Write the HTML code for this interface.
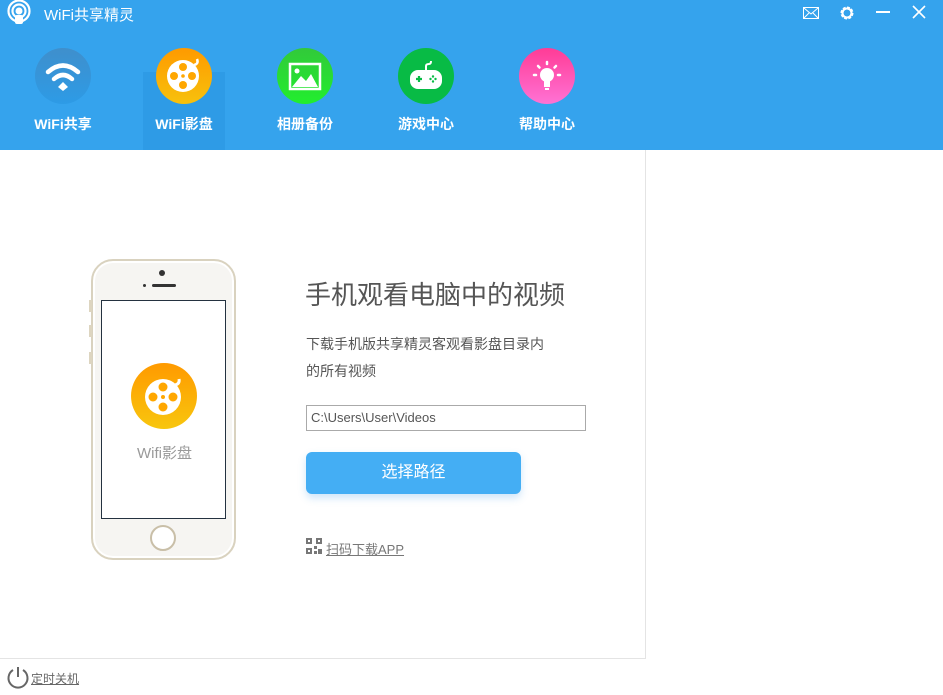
<!DOCTYPE html>
<html><head><meta charset="utf-8"><style>
*{margin:0;padding:0;box-sizing:border-box}
body{width:943px;height:695px;overflow:hidden;background:#fff;font-family:"Liberation Sans","Noto Sans CJK SC",sans-serif;position:relative}
.hdr{position:absolute;left:0;top:0;width:943px;height:150px;background:#35a3ed}
.sel{position:absolute;left:143px;top:72px;width:82px;height:78px;background:#2e9be6}
.title{position:absolute;left:44px;top:4px;color:#fff;font-size:15px}
.tab{position:absolute;top:48px;width:100px;text-align:center}
.tab .c{width:56px;height:56px;border-radius:50%;margin:0 auto;position:relative}
.tab .c svg{position:absolute;left:0;top:0}
.tab .l{color:#fff;font-weight:bold;font-size:14px;margin-top:10px}
.vline{position:absolute;left:645px;top:150px;width:1px;height:508px;background:#e4e4e4}
.hline{position:absolute;left:0;top:658px;width:646px;height:1px;background:#e4e4e4}
</style></head><body>
<div class="hdr"></div>
<div class="sel"></div>
<svg style="position:absolute;left:5px;top:0" width="28" height="26" viewBox="0 0 28 26">
<circle cx="14" cy="11" r="10.5" fill="none" stroke="#fff" stroke-width="2.2"/>
<circle cx="14" cy="11" r="6.5" fill="none" stroke="#fff" stroke-width="2.2"/>
<circle cx="14" cy="11" r="3.5" fill="#fff"/>
<rect x="10" y="15" width="8" height="9" rx="2" fill="#fff"/>
</svg>
<div class="title">WiFi共享精灵</div>
<svg style="position:absolute;left:803px;top:7px" width="16" height="12" viewBox="0 0 16 12"><rect x="0.5" y="0.5" width="15" height="11" fill="none" stroke="#fff"/><path d="M1 1 L8 7 L15 1 M1 11 L6 6 M15 11 L10 6" fill="none" stroke="#fff"/></svg>
<svg style="position:absolute;left:839px;top:5px" width="16" height="16" viewBox="0 0 16 16"><circle cx="8" cy="8" r="5" fill="none" stroke="#fff" stroke-width="3" stroke-dasharray="2.6 1.3"/><circle cx="8" cy="8" r="4.5" fill="none" stroke="#fff" stroke-width="2"/></svg>
<div style="position:absolute;left:876px;top:11px;width:14px;height:2px;background:#fff"></div>
<svg style="position:absolute;left:912px;top:5px" width="14" height="14" viewBox="0 0 14 14"><path d="M1 1L13 13M13 1L1 13" stroke="#fff" stroke-width="1.6"/></svg>

<div class="tab" style="left:13px"><div class="c" style="background:linear-gradient(#3f8fcc,#2d9be6)">
<svg width="56" height="56" viewBox="0 0 56 56"><path d="M13 24 Q28 11 43 24" fill="none" stroke="#fff" stroke-width="4.5" stroke-linecap="round"/><path d="M19 31 Q28 23 37 31" fill="none" stroke="#fff" stroke-width="4.5" stroke-linecap="round"/><path d="M23 39 L28 34 L33 39 L28 43Z" fill="#fff"/></svg></div><div class="l">WiFi共享</div></div>

<div class="tab" style="left:134px"><div class="c" style="background:linear-gradient(#ff9a00,#f7c10c)">
<svg width="56" height="56" viewBox="0 0 56 56"><circle cx="27" cy="28" r="16" fill="#fff"/><path d="M38 17 Q43 16 41 11" fill="none" stroke="#fff" stroke-width="2.5"/><g fill="#ffa700"><circle cx="27" cy="19" r="4"/><circle cx="27" cy="37" r="4"/><circle cx="18" cy="28" r="4"/><circle cx="36" cy="28" r="4"/><circle cx="27" cy="28" r="1.8"/></g></svg></div><div class="l">WiFi影盘</div></div>

<div class="tab" style="left:255px"><div class="c" style="background:linear-gradient(#32c93a,#22ee2e)">
<svg width="56" height="56" viewBox="0 0 56 56"><rect x="13" y="16" width="30" height="25" fill="none" stroke="#fff" stroke-width="2.5"/><circle cx="20" cy="23" r="2.5" fill="#fff"/><path d="M15 39 L24 28 L29 33 L34 26 L41 39Z" fill="#fff"/></svg></div><div class="l">相册备份</div></div>

<div class="tab" style="left:376px"><div class="c" style="background:#08bb45">
<svg width="56" height="56" viewBox="0 0 56 56"><rect x="12" y="22" width="32" height="19" rx="8" fill="#fff"/><path d="M28 22 V18 Q28 16 31 16 Q33 16 33 13" fill="none" stroke="#fff" stroke-width="2"/><path d="M18 31H24M21 28V34" stroke="#08bb45" stroke-width="2.2"/><g fill="#08bb45"><circle cx="35" cy="28.5" r="1.2"/><circle cx="35" cy="33.5" r="1.2"/><circle cx="32.5" cy="31" r="1.2"/><circle cx="37.5" cy="31" r="1.2"/></g></svg></div><div class="l">游戏中心</div></div>

<div class="tab" style="left:497px"><div class="c" style="background:linear-gradient(#ff3c96,#ff72d4)">
<svg width="56" height="56" viewBox="0 0 56 56"><circle cx="28" cy="27" r="7" fill="#fff"/><rect x="25" y="32" width="6" height="7" fill="#fff"/><rect x="26" y="40" width="4" height="2" fill="#fff"/><g stroke="#fff" stroke-width="2.5" stroke-linecap="round"><path d="M28 14V16M19 18L20.5 19.5M37 18L35.5 19.5M15 27H17M39 27H41"/></g></svg></div><div class="l">帮助中心</div></div>

<div style="position:absolute;left:91px;top:259px;width:145px;height:301px;border-radius:22px;background:#f6f5f2;border:2px solid #d9d2bf;box-shadow:inset 0 0 0 2px #fff"></div>
<div style="position:absolute;left:89px;top:300px;width:3px;height:12px;background:#ddd5c0"></div>
<div style="position:absolute;left:89px;top:325px;width:3px;height:12px;background:#ddd5c0"></div>
<div style="position:absolute;left:89px;top:352px;width:3px;height:12px;background:#ddd5c0"></div>
<div style="position:absolute;left:159px;top:270px;width:6px;height:6px;border-radius:50%;background:#333"></div>
<div style="position:absolute;left:143px;top:284px;width:3px;height:3px;border-radius:50%;background:#333"></div>
<div style="position:absolute;left:152px;top:284px;width:24px;height:3px;border-radius:2px;background:#333"></div>
<div style="position:absolute;left:101px;top:300px;width:125px;height:219px;background:#fff;border:1px solid #243240"></div>
<div style="position:absolute;left:150px;top:525px;width:26px;height:26px;border-radius:50%;border:2px solid #c9bfa8;background:#fff"></div>
<svg style="position:absolute;left:131px;top:363px" width="66" height="66" viewBox="0 0 66 66"><defs><linearGradient id="g" x1="0" y1="0" x2="0" y2="1"><stop offset="0" stop-color="#ff9a00"/><stop offset="1" stop-color="#f8c60e"/></linearGradient></defs><circle cx="33" cy="33" r="33" fill="url(#g)"/><circle cx="32" cy="34" r="18" fill="#fff"/><path d="M44 22 Q49 21 48 16" fill="none" stroke="#fff" stroke-width="3"/><g fill="#ffa700"><circle cx="32" cy="24" r="4.5"/><circle cx="32" cy="44" r="4.5"/><circle cx="22" cy="34" r="4.5"/><circle cx="42" cy="34" r="4.5"/><circle cx="32" cy="34" r="2"/></g></svg>
<div style="position:absolute;left:101px;top:442px;width:127px;text-align:center;color:#999;font-size:15px">Wifi影盘</div>

<div style="position:absolute;left:305px;top:275px;color:#555;font-size:26px">手机观看电脑中的视频</div>
<div style="position:absolute;left:306px;top:331px;color:#555;font-size:14px;line-height:27px">下载手机版共享精灵客观看影盘目录内<br>的所有视频</div>
<div style="position:absolute;left:306px;top:405px;width:280px;height:26px;border:1px solid #aaa;color:#555;font-size:13px;padding:4px 0 0 4px">C:\Users\User\Videos</div>
<div style="position:absolute;left:306px;top:452px;width:215px;height:42px;border-radius:6px;background:#44aef4;box-shadow:0 4px 8px rgba(60,150,230,0.25);color:#fff;font-size:16px;text-align:center;line-height:42px">选择路径</div>
<svg style="position:absolute;left:306px;top:538px" width="16" height="16" viewBox="0 0 16 16"><g fill="#777"><rect x="0" y="0" width="6" height="6"/><rect x="10" y="0" width="6" height="6"/><rect x="0" y="10" width="6" height="6"/><rect x="8" y="8" width="3" height="3"/><rect x="12" y="11" width="4" height="5"/><rect x="8" y="13" width="3" height="3"/></g><g fill="#fff"><rect x="2" y="2" width="2" height="2"/><rect x="12" y="2" width="2" height="2"/><rect x="2" y="12" width="2" height="2"/></g></svg>
<div style="position:absolute;left:326px;top:539px;color:#777;font-size:13px;text-decoration:underline">扫码下载APP</div>

<div class="vline"></div><div class="hline"></div>
<svg style="position:absolute;left:6px;top:665px" width="24" height="26" viewBox="0 0 24 26"><path d="M7 5 A9.5 9.5 0 1 0 17 5" fill="none" stroke="#666" stroke-width="2"/><path d="M12 2V12" stroke="#666" stroke-width="2"/></svg>
<div style="position:absolute;left:31px;top:670px;color:#666;font-size:12px;text-decoration:underline">定时关机</div>
</body></html>
